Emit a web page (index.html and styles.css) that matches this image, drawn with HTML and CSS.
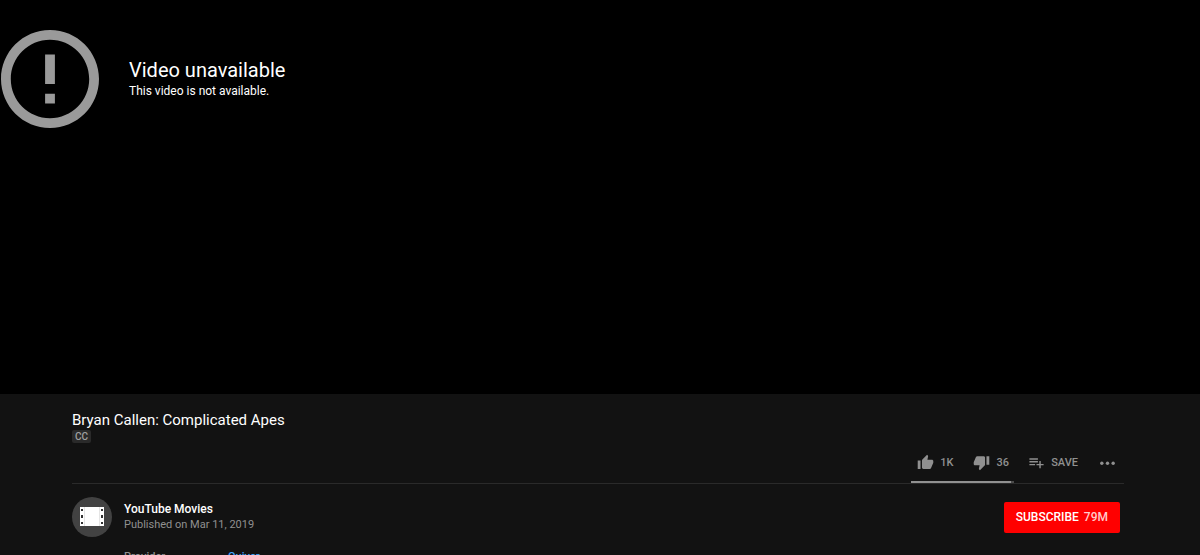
FILE: index.html
```html
<!DOCTYPE html>
<html lang="en">
<head>
  <meta charset="UTF-8">
  <meta name="viewport" content="width=device-width, initial-scale=1.0">
  <title>Bryan Callen: Complicated Apes</title>
  <link rel="stylesheet" href="styles.css">
</head>
<body>

  <!-- Player -->
  <section class="player">
    <svg class="error-icon" viewBox="2 2 20 20" aria-hidden="true">
      <path d="M11 15h2v2h-2zm0-8h2v6h-2zm1-5C6.48 2 2 6.48 2 12s4.48 10 10 10 10-4.48 10-10S17.52 2 12 2zm0 18c-4.42 0-8-3.58-8-8s3.58-8 8-8 8 3.58 8 8-3.58 8-8 8z"/>
    </svg>
    <div class="error-text">
      <h2>Video unavailable</h2>
      <p>This video is not available.</p>
    </div>
  </section>

  <main class="content">
    <!-- Title and actions -->
    <header class="info">
      <h1>Bryan Callen: Complicated Apes</h1>
      <span class="badge">CC</span>
      <div class="menu">
        <div class="sentiment">
          <button class="action">
            <svg viewBox="0 0 24 24" aria-hidden="true"><path d="M1 21h4V9H1v12zm22-11c0-1.1-.9-2-2-2h-6.31l.95-4.57.03-.32c0-.41-.17-.79-.44-1.06L14.17 1 7.59 7.59C7.22 7.95 7 8.45 7 9v10c0 1.1.9 2 2 2h9c.83 0 1.54-.5 1.84-1.22l3.02-7.05c.09-.23.14-.47.14-.73v-2z"/></svg>
            1K
          </button>
          <button class="action">
            <svg viewBox="0 0 24 24" aria-hidden="true"><path d="M15 3H6c-.83 0-1.54.5-1.84 1.22l-3.02 7.05c-.09.23-.14.47-.14.73v2c0 1.1.9 2 2 2h6.31l-.95 4.57-.03.32c0 .41.17.79.44 1.06L9.83 23l6.59-6.59c.36-.36.58-.86.58-1.41V5c0-1.1-.9-2-2-2zm4 0v12h4V3h-4z"/></svg>
            36
          </button>
          <div class="sentiment-bar"><div class="likes"></div></div>
        </div>
        <button class="action save">
          <svg viewBox="0 0 24 24" aria-hidden="true"><path d="M14 10H2v2h12v-2zm0-4H2v2h12V6zm4 8v-4h-2v4h-4v2h4v4h2v-4h4v-2h-4zM2 16h8v-2H2v2z"/></svg>
          SAVE
        </button>
        <button class="action more" aria-label="More actions">
          <svg viewBox="0 0 24 24" aria-hidden="true"><circle cx="4" cy="13" r="2.4"/><circle cx="12" cy="13" r="2.4"/><circle cx="20" cy="13" r="2.4"/></svg>
        </button>
      </div>
    </header>

    <!-- Channel -->
    <section class="channel">
      <svg class="avatar" viewBox="0 0 40 40" aria-hidden="true">
        <circle cx="20" cy="20" r="20" fill="#424242"/>
        <path fill="#fff" d="M8 10h24v19H8z"/>
        <path fill="#333" d="M9 12h2v2H9zm0 6h2v3H9zm0 7h2v2H9zM29 12h2v2h-2zm0 6h2v3h-2zm0 7h2v2h-2z"/>
        <path fill="#ccc" d="M12 10h.5v19H12zM27.500 10h.5v19h-.5z"/>
      </svg>
      <div class="owner">
        <a class="name" href="#">YouTube Movies</a>
        <span class="date">Published on Mar 11, 2019</span>
      </div>
      <button class="subscribe">SUBSCRIBE<span>79M</span></button>
    </section>

    <dl class="metadata">
      <dt>Provider</dt>
      <dd><a href="#">Quiver</a></dd>
    </dl>
  </main>

</body>
</html>
```
FILE: styles.css
```css
* {
  box-sizing: border-box;
  margin: 0;
  padding: 0;
}

body {
  height: 100vh;
  overflow: hidden;
  font-family: Roboto, "Liberation Sans", sans-serif;
  background-color: #121212;
  color: #fff;
}

a {
  text-decoration: none;
}

button {
  border: none;
  background: none;
  font-family: inherit;
  cursor: pointer;
}

/* Player */
.player {
  display: flex;
  align-items: flex-start;
  gap: 30px;
  height: 394px;
  padding: 30px 0 0 1px;
  background-color: #000;
}

.error-icon {
  width: 98px;
  height: 98px;
  fill: #9a9a9a;
}

.error-text {
  padding-top: 28px;
}

.error-text h2 {
  font-size: 20px;
  font-weight: 400;
  line-height: 24px;
}

.error-text p {
  font-size: 12px;
  line-height: 18px;
}

/* Title and actions */
.content {
  padding: 16px 76px 0 72px;
}

.info {
  display: flex;
  flex-direction: column;
  align-items: flex-start;
  border-bottom: 1px solid #2a2a2a;
}

.info h1 {
  font-size: 15px;
  font-weight: 400;
  line-height: 20px;
}

.badge {
  padding: 0 3px;
  border-radius: 2px;
  background-color: #2a2a2a;
  color: #a0a0a0;
  font-size: 10px;
  font-weight: 500;
  line-height: 13px;
}

.menu {
  display: flex;
  align-self: flex-end;
  height: 40px;
  padding-right: 8px;
}

.sentiment {
  position: relative;
  display: flex;
  gap: 20px;
  width: 103px;
  margin-right: 14px;
  padding-left: 6px;
}

.sentiment-bar {
  position: absolute;
  left: 0;
  right: 0;
  bottom: 0;
  height: 2px;
  background-color: #4a4a4a;
}

.likes {
  width: 97%;
  height: 100%;
  background-color: #909090;
}

.action {
  display: flex;
  align-items: center;
  gap: 6px;
  height: 38px;
  color: #909090;
  font-size: 11px;
  font-weight: 500;
}

.action svg {
  width: 17px;
  height: 17px;
  fill: #909090;
}

.more {
  margin-left: 21px;
}

/* Channel */
.channel {
  display: flex;
  align-items: center;
  padding: 13px 4px 0 0;
}

.avatar {
  width: 40px;
  height: 40px;
  margin-right: 12px;
}

.owner {
  display: flex;
  flex-direction: column;
  flex: 1;
  line-height: 15px;
}

.name {
  color: #fff;
  font-size: 12px;
  font-weight: 500;
}

.date {
  color: #909090;
  font-size: 11px;
}

.subscribe {
  height: 31px;
  padding: 0 12px;
  border-radius: 2px;
  background-color: #f00;
  color: #fff;
  font-size: 12px;
  font-weight: 500;
}

.subscribe span {
  margin-left: 5px;
  color: #ffcccc;
}

/* Metadata */
.metadata {
  display: flex;
  padding: 12px 0 0 52px;
  font-size: 11px;
  line-height: 16px;
}

.metadata dt {
  width: 104px;
  color: #909090;
  font-weight: 500;
}

.metadata a {
  color: #3ea6ff;
  font-weight: 500;
}
```
